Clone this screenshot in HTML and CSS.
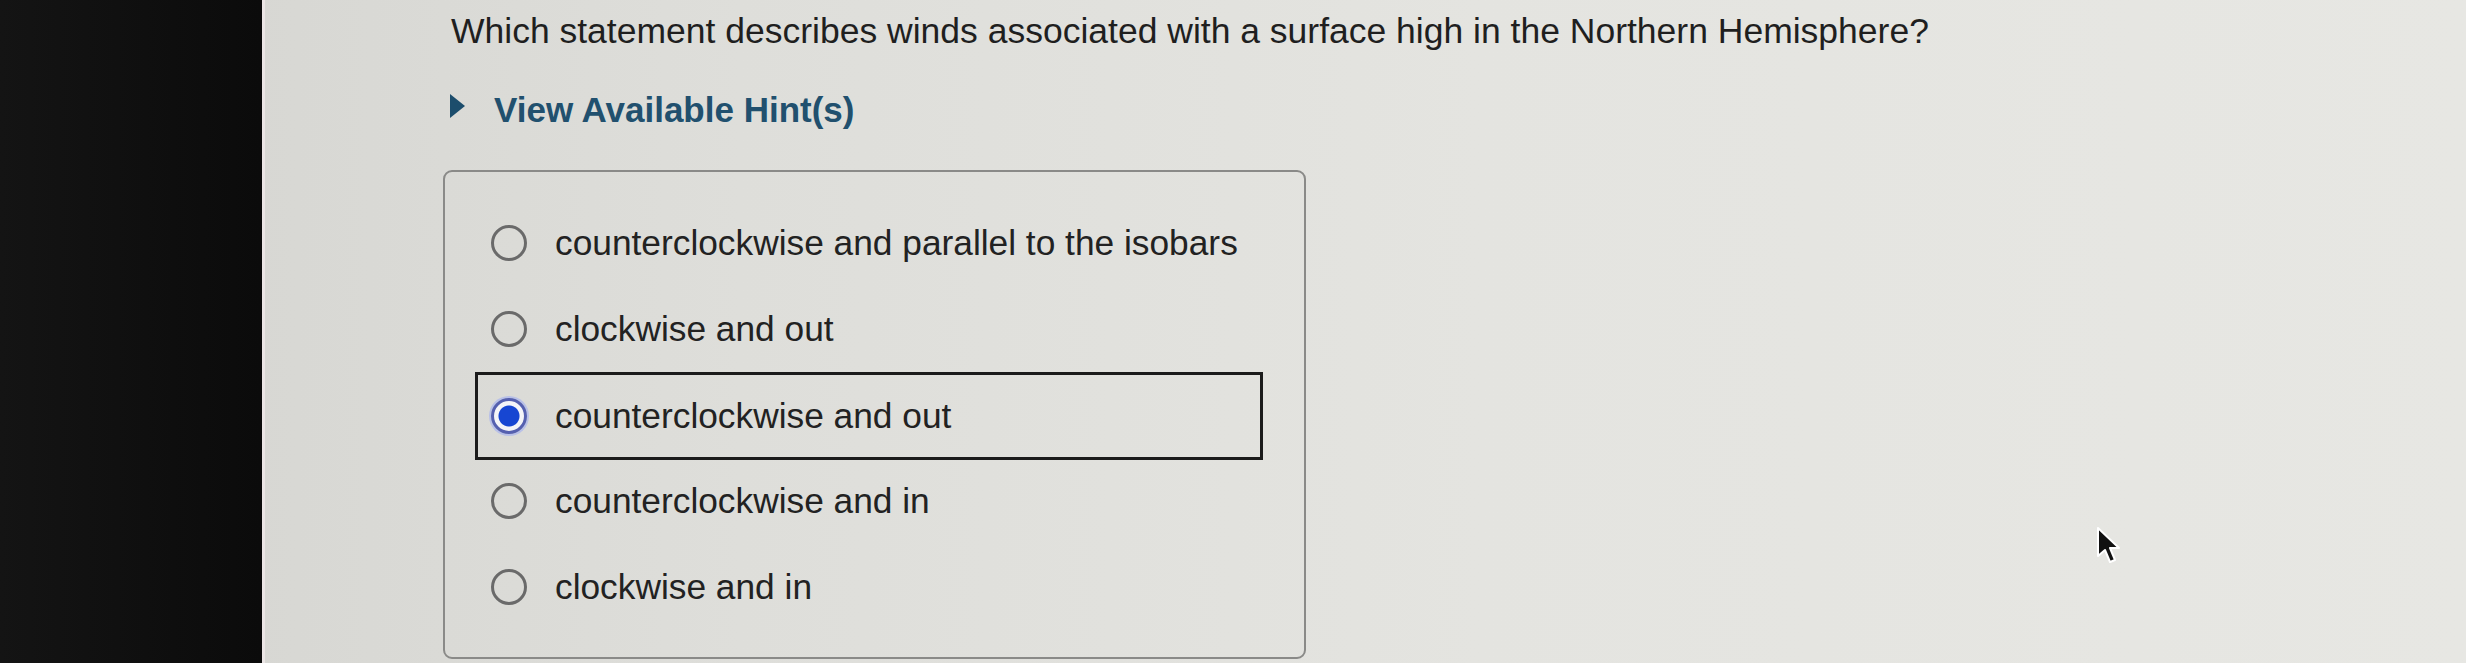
FILE: index.html
```html
<!DOCTYPE html>
<html lang="en">
<head>
<meta charset="UTF-8" />
<title>Question</title>
<link rel="stylesheet" href="styles.css">
</head>
<body>

<div class="side-bar"></div>

<div class="content">
  <div class="question">Which statement describes winds associated with a surface high in the Northern Hemisphere?</div>

  <div class="hint-toggle">
    <span class="hint-arrow"></span>
    <span class="hint-label">View Available Hint(s)</span>
  </div>

  <div class="answer-box">
    <label class="option">
      <span class="radio"></span>
      <span class="option-text">counterclockwise and parallel to the isobars</span>
    </label>
    <label class="option">
      <span class="radio"></span>
      <span class="option-text">clockwise and out</span>
    </label>
    <label class="option selected">
      <span class="radio checked"></span>
      <span class="option-text">counterclockwise and out</span>
    </label>
    <label class="option">
      <span class="radio"></span>
      <span class="option-text">counterclockwise and in</span>
    </label>
    <label class="option">
      <span class="radio"></span>
      <span class="option-text">clockwise and in</span>
    </label>
  </div>
</div>

<!-- puntero del raton -->
<svg class="mouse-pointer" width="26" height="40" viewBox="0 0 26 40">
  <path d="M2 2 L2 30 L9 24 L14 36 L19 34 L14 22 L23 22 Z" fill="#111" stroke="#fff" stroke-width="2" stroke-linejoin="round"/>
</svg>

</body>
</html>
```

FILE: styles.css
```css
html, body {
  margin: 0;
  padding: 0;
  height: 663px;
  overflow: hidden;
}

body {
  display: flex;
  font-family: "Liberation Sans", Arial, sans-serif;
  background: linear-gradient(to right, #d4d4d0 0%, #dededa 30%, #e4e4e0 60%, #e7e7e3 100%);
  position: relative;
}

.side-bar {
  width: 262px;
  flex-shrink: 0;
  background: linear-gradient(to right, #141414, #0b0b0b);
  border-right: 3px solid #ebe5e5;
}

.content {
  flex: 1;
  padding-left: 178px;
}

.question {
  margin: 11px 0 0 8px;
  font-size: 35.5px;
  line-height: 40px;
  color: #1f1f1f;
}

.hint-toggle {
  margin: 39px 0 0 7px;
  display: flex;
  align-items: center;
  height: 40px;
}

.hint-arrow {
  width: 0;
  height: 0;
  border-top: 12px solid transparent;
  border-bottom: 12px solid transparent;
  border-left: 15px solid #1c4d6c;
  margin-right: 29px;
  margin-top: -8px;
}

.hint-label {
  font-size: 35px;
  font-weight: bold;
  color: #21506e;
}

.answer-box {
  margin-top: 40px;
  width: 799px;
  height: 457px;
  border: 2px solid #8a8a88;
  border-radius: 9px;
  padding: 28px 30px 0 30px;
  box-sizing: content-box;
}

.option {
  display: flex;
  align-items: center;
  height: 86px;
  box-sizing: border-box;
  border: 3px solid transparent;
  padding-left: 13px;
  margin-right: 11px;
}

.option.selected {
  border-color: #1b1b1b;
  height: 88px;
  margin-bottom: -2px;
}

.radio {
  width: 36px;
  height: 36px;
  box-sizing: border-box;
  border: 3px solid #6a6a6a;
  border-radius: 50%;
  margin-right: 28px;
  flex-shrink: 0;
}

.radio.checked {
  border-color: #5560b0;
  background: radial-gradient(circle, #1746d2 0, #1746d2 10px, #f4f4f8 11px);
  box-shadow: 0 0 0 2px #b8c0e8;
}

.option-text {
  font-size: 35.3px;
  color: #222;
}

.mouse-pointer {
  position: absolute;
  left: 2096px;
  top: 526px;
}
```
